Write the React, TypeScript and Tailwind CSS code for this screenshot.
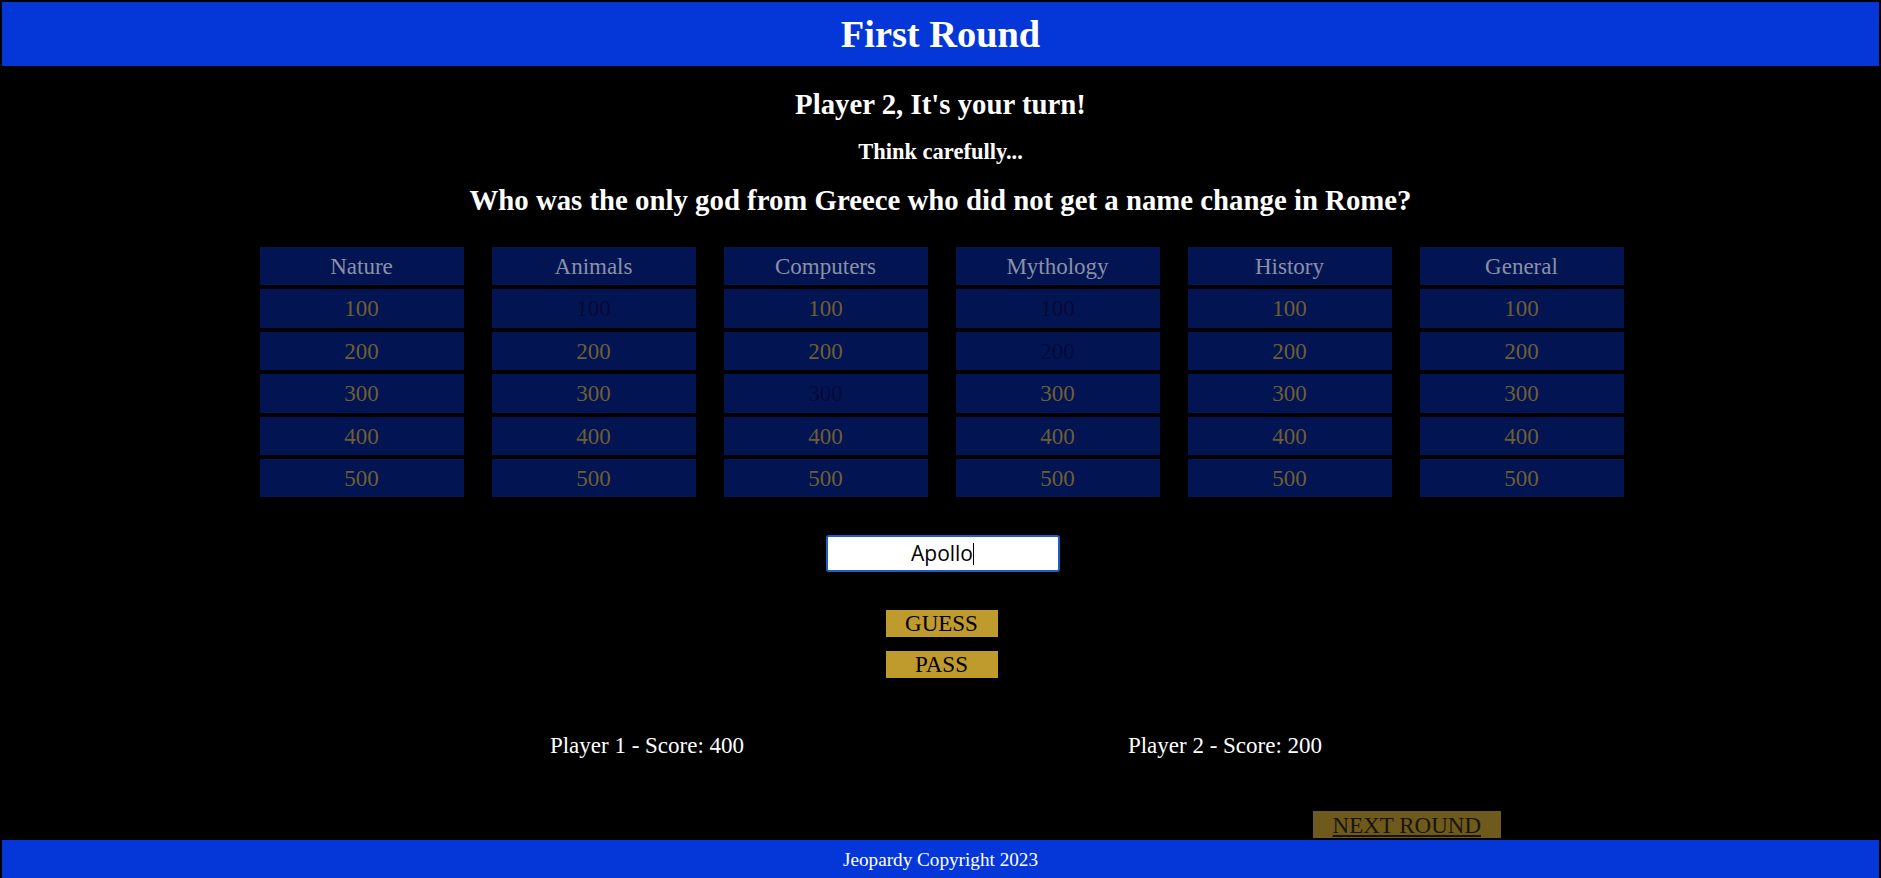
const categories = ['Nature', 'Animals', 'Computers', 'Mythology', 'History', 'General']
const values = [100, 200, 300, 400, 500]

// cells already picked this round, shown with the text faded out
const answered: Record<string, number[]> = {
  Animals: [100],
  Computers: [300],
  Mythology: [100, 200],
}

const App = () => {
  return (
    <div className="min-h-[878px] bg-black px-[2px] pt-[2px] text-white font-['Liberation_Serif','Times_New_Roman',serif]">
      {/* Header */}
      <header className="h-[64px] bg-[#0537d8] flex items-center justify-center">
        <h1 className="text-[38.4px] font-bold leading-none">First Round</h1>
      </header>

      {/* Turn info */}
      <h2 className="mt-[21px] text-center text-[28.8px] font-bold leading-[34px]">Player 2, It's your turn!</h2>
      <h3 className="mt-[18px] text-center text-[22.5px] font-bold leading-[26px]">Think carefully...</h3>
      <h2 className="mt-[18px] text-center text-[28.8px] font-bold leading-[34px]">
        Who was the only god from Greece who did not get a name change in Rome?
      </h2>

      {/* Board */}
      <div className="mt-[30px] flex justify-center gap-[28px] pl-[2px]">
        {categories.map((cat) => (
          <div key={cat} className="w-[204px] flex flex-col gap-[4px]">
            <div className="h-[38.4px] pt-[2px] bg-[#021552] flex items-center justify-center text-[23px] text-[#8b90a8]">
              {cat}
            </div>
            {values.map((v) => {
              const done = answered[cat]?.includes(v)
              return (
                <div
                  key={v}
                  className={
                    'h-[38.4px] pt-[2px] bg-[#021552] flex items-center justify-center text-[23px] ' +
                    (done ? 'text-[#05083a]' : 'text-[#6e5e33]')
                  }
                >
                  {v}
                </div>
              )
            })}
          </div>
        ))}
      </div>

      {/* Answer */}
      <div className="mt-[38px] flex justify-center pl-[4px]">
        <div className="w-[234px] h-[37px] border-2 border-[#1f5fc4] rounded-[3px] bg-white flex items-center justify-center font-['Open_Sans',sans-serif] text-[21px] text-black">
          <span>Apollo</span>
          <span className="w-px h-[22px] bg-black" />
        </div>
      </div>

      <div className="mt-[38px] flex flex-col items-center gap-[14px] pl-[2px]">
        <button className="w-[112px] h-[27px] bg-[#bf9a2c] text-black text-[23px] leading-none">GUESS</button>
        <button className="w-[112px] h-[27px] bg-[#bf9a2c] text-black text-[23px] leading-none">PASS</button>
      </div>

      {/* Scores */}
      <div className="mt-[54px] mx-auto w-[1165px] grid grid-cols-2 text-[23px] leading-[27px] pr-[9px]">
        <p className="text-center">Player 1 - Score: 400</p>
        <p className="text-center">Player 2 - Score: 200</p>
      </div>

      <div className="mt-[52px] flex justify-end pr-[378px]">
        <a href="#" className="h-[27px] px-[20px] pt-[1px] bg-[#6e5a1c] text-[#1a1406] text-[23px] leading-[27px] underline">
          NEXT ROUND
        </a>
      </div>

      {/* Footer */}
      <footer className="mt-[2px] h-[38px] pt-[3px] bg-[#0537d8] flex items-center justify-center text-[19.2px]">
        Jeopardy Copyright 2023
      </footer>
    </div>
  )
}

export default App
